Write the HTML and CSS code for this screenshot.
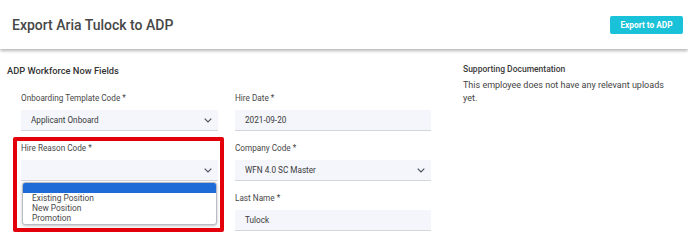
FILE: index.html
```html
<!DOCTYPE html>
<html>
<head>
<meta charset="utf-8">
<link rel="stylesheet" href="styles.css">
</head>
<body>
<header class="topbar">
  <h1 class="title">Export Aria Tulock to ADP</h1>
  <button class="export-btn">Export to ADP</button>
</header>
<main class="content">
  <section class="fields">
    <h2 class="section-title">ADP Workforce Now Fields</h2>
    <div class="form-grid">
      <div class="group">
        <label class="label">Onboarding Template Code *</label>
        <div class="field">Applicant Onboard<svg class="chev" viewBox="0 0 8 5"><path d="M0.7 0.7l3.3 3.3 3.3-3.3" fill="none" stroke="#4a5260" stroke-width="1.2"/></svg></div>
      </div>
      <div class="group">
        <label class="label">Hire Date *</label>
        <div class="field">2021-09-20</div>
      </div>
      <div class="group highlighted">
        <label class="label">Hire Reason Code *</label>
        <div class="field"><svg class="chev" viewBox="0 0 8 5"><path d="M0.7 0.7l3.3 3.3 3.3-3.3" fill="none" stroke="#4a5260" stroke-width="1.2"/></svg></div>
        <div class="dropdown">
          <div class="opt selected"></div>
          <div class="opt">Existing Position</div>
          <div class="opt">New Position</div>
          <div class="opt">Promotion</div>
        </div>
        <div class="redbox"></div>
      </div>
      <div class="group">
        <label class="label">Company Code *</label>
        <div class="field">WFN 4.0 SC Master<svg class="chev" viewBox="0 0 8 5"><path d="M0.7 0.7l3.3 3.3 3.3-3.3" fill="none" stroke="#4a5260" stroke-width="1.2"/></svg></div>
      </div>
      <div class="group"></div>
      <div class="group">
        <label class="label">Last Name *</label>
        <div class="field">Tulock</div>
      </div>
    </div>
  </section>
  <aside class="docs">
    <h3 class="docs-title">Supporting Documentation</h3>
    <p class="docs-text">This employee does not have any relevant uploads yet.</p>
  </aside>
</main>
</body>
</html>
```
FILE: styles.css
```css
* { box-sizing: border-box; }
html, body { margin: 0; padding: 0; background: #fff; }
body { font-family: Roboto, "Liberation Sans", sans-serif; color: #3a3a3a; width: 688px; height: 241px; overflow: hidden; }

.topbar {
  height: 49px;
  display: flex;
  align-items: center;
  justify-content: space-between;
  padding: 0 5px 0 12px;
  background: #fff;
  box-shadow: 0 2px 3px rgba(0,0,0,0.28);
  position: relative;
  z-index: 2;
}
.title { margin: 0; font-size: 14px; font-weight: 500; color: #474747; }
.export-btn {
  height: 18px;
  width: 73px;
  padding: 0;
  border: none;
  border-radius: 2px;
  background: #19c2d8;
  color: #fff;
  font-family: Roboto, "Liberation Sans", sans-serif;
  font-size: 8.3px;
  font-weight: 700;
}

.content { display: flex; }
.fields { width: 463px; padding-left: 7px; padding-top: 15px; }
.section-title { margin: 0; font-size: 9.3px; font-weight: 500; line-height: 13px; color: #333; }

.form-grid {
  margin-top: 15px;
  margin-left: 14px;
  display: grid;
  grid-template-columns: 197px 196px;
  column-gap: 17px;
  row-gap: 11px;
}
.group { position: relative; height: 39px; }
.label { display: block; height: 12px; line-height: 12px; font-size: 8.2px; color: #474747; margin-bottom: 6px; }
.field {
  height: 21px;
  background: #f4f6fc;
  border-bottom: 1px solid #d3d6db;
  padding: 0 6px 0 10px;
  font-size: 8.2px;
  color: #3a3a3a;
  display: flex;
  align-items: center;
}
.chev { width: 8px; height: 5px; margin-left: auto; }

.dropdown {
  position: absolute;
  left: 1px;
  top: 40px;
  width: 195px;
  height: 43px;
  background: #fff;
  border: 1px solid #b9bcc2;
  border-radius: 3px;
  box-shadow: 0 1px 3px rgba(0,0,0,0.25);
  overflow: hidden;
  z-index: 3;
}
.opt { height: 10px; line-height: 10px; font-size: 8.4px; color: #4a4a4a; padding-left: 9px; }
.opt.selected { background: #1e6ad6; }

.redbox {
  position: absolute;
  left: -8px;
  top: -5px;
  width: 211px;
  height: 95px;
  border: 4px solid #e3000b;
  border-radius: 2px;
  z-index: 4;
  pointer-events: none;
}

.docs { padding-top: 14px; width: 212px; }
.docs-title { margin: 0; font-size: 8.5px; font-weight: 500; line-height: 13px; color: #3a3a3a; }
.docs-text { margin: 3px 0 0; font-size: 9px; line-height: 13px; color: #444; }
```
